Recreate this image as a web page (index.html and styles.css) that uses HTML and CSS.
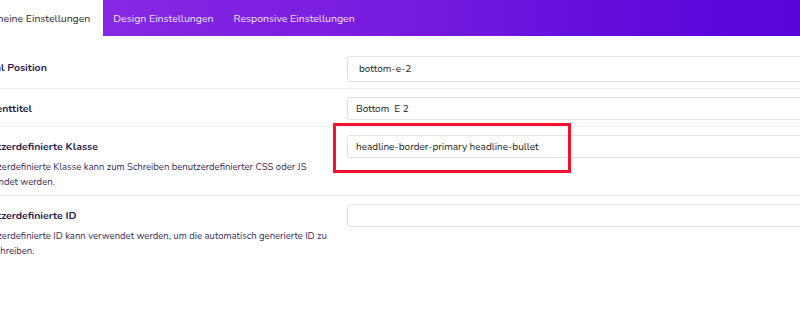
FILE: index.html
```html
<!DOCTYPE html>
<html lang="de">
<head>
    <meta charset="UTF-8">
    <title>Element Einstellungen</title>
    <link rel="stylesheet" href="styles.css">
</head>
<body>

    <div class="panel">
        <!-- Tabs -->
        <div class="tabs">
            <div class="tab active">Allgemeine Einstellungen</div>
            <div class="tab">Design Einstellungen</div>
            <div class="tab">Responsive Einstellungen</div>
        </div>

        <!-- Settings rows -->
        <div class="settings">
            <div class="row first">
                <div class="label-col">
                    <div class="label">Global Position</div>
                </div>
                <div class="field">
                    <input type="text" class="input pad-wide" value="bottom-e-2">
                </div>
            </div>

            <div class="row">
                <div class="label-col">
                    <div class="label">Elementtitel</div>
                </div>
                <div class="field">
                    <input type="text" class="input" value="Bottom  E 2">
                </div>
            </div>

            <div class="row">
                <div class="label-col">
                    <div class="label">Benutzerdefinierte Klasse</div>
                    <p class="desc">Benutzerdefinierte Klasse kann zum Schreiben benutzerdefinierter CSS oder JS verwendet werden.</p>
                </div>
                <div class="field">
                    <input type="text" class="input" value="headline-border-primary headline-bullet">
                    <div class="highlight"></div>
                </div>
            </div>

            <div class="row">
                <div class="label-col">
                    <div class="label">Benutzerdefinierte ID</div>
                    <p class="desc">Benutzerdefinierte ID kann verwendet werden, um die automatisch generierte ID zu überschreiben.</p>
                </div>
                <div class="field">
                    <input type="text" class="input" value="">
                </div>
            </div>
        </div>
    </div>

</body>
</html>
```

FILE: styles.css
```css
body {
    margin: 0;
    padding: 0;
    background-color: #fff;
    font-family: 'Nunito', 'Lato', 'Noto Sans', sans-serif;
    color: #2a1d48;
    overflow: hidden;
}

.panel {
    width: 1100px;
    margin-left: -28px;
}

.tabs {
    display: flex;
    height: 36px;
    margin-left: -19px;
    background: linear-gradient(90deg, #8d2de4 0%, #7a1ee0 35%, #5a06da 70%, #4c00d8 100%);
}

.tab {
    display: flex;
    align-items: center;
    padding: 0 10px;
    font-size: 10.5px;
    color: #ece2ff;
}

.tab.active {
    background-color: #fff;
    color: #2a2a2a;
    padding: 0 13px 0 16px;
}

.settings {
    padding-top: 12px;
}

.row {
    display: grid;
    grid-template-columns: 360px 1fr;
    gap: 15px;
    padding: 8px 0 6px;
    border-bottom: 1px solid #eeeeee;
}

.row:last-child {
    border-bottom: none;
}

.row.first .input {
    height: 26px;
}

.label-col {
    padding-top: 4px;
}

.label {
    font-size: 10.5px;
    font-weight: 700;
    color: #2a1a4a;
    line-height: 16px;
}

.desc {
    margin: 4px 0 0;
    font-size: 9.5px;
    line-height: 15px;
    color: #3a2c55;
}

.field {
    position: relative;
}

.input {
    display: block;
    box-sizing: border-box;
    width: 100%;
    height: 23px;
    padding: 0 8px;
    border: 1px solid #e2e2e2;
    border-radius: 3px;
    font-family: inherit;
    font-size: 10px;
    color: #222;
    background-color: #fff;
    outline: none;
}

.input.pad-wide {
    padding-left: 11px;
}

/* red annotation frame */
.highlight {
    position: absolute;
    left: -14px;
    top: -12px;
    width: 238px;
    height: 50px;
    box-sizing: border-box;
    border: 3px solid #f4112f;
}
```
